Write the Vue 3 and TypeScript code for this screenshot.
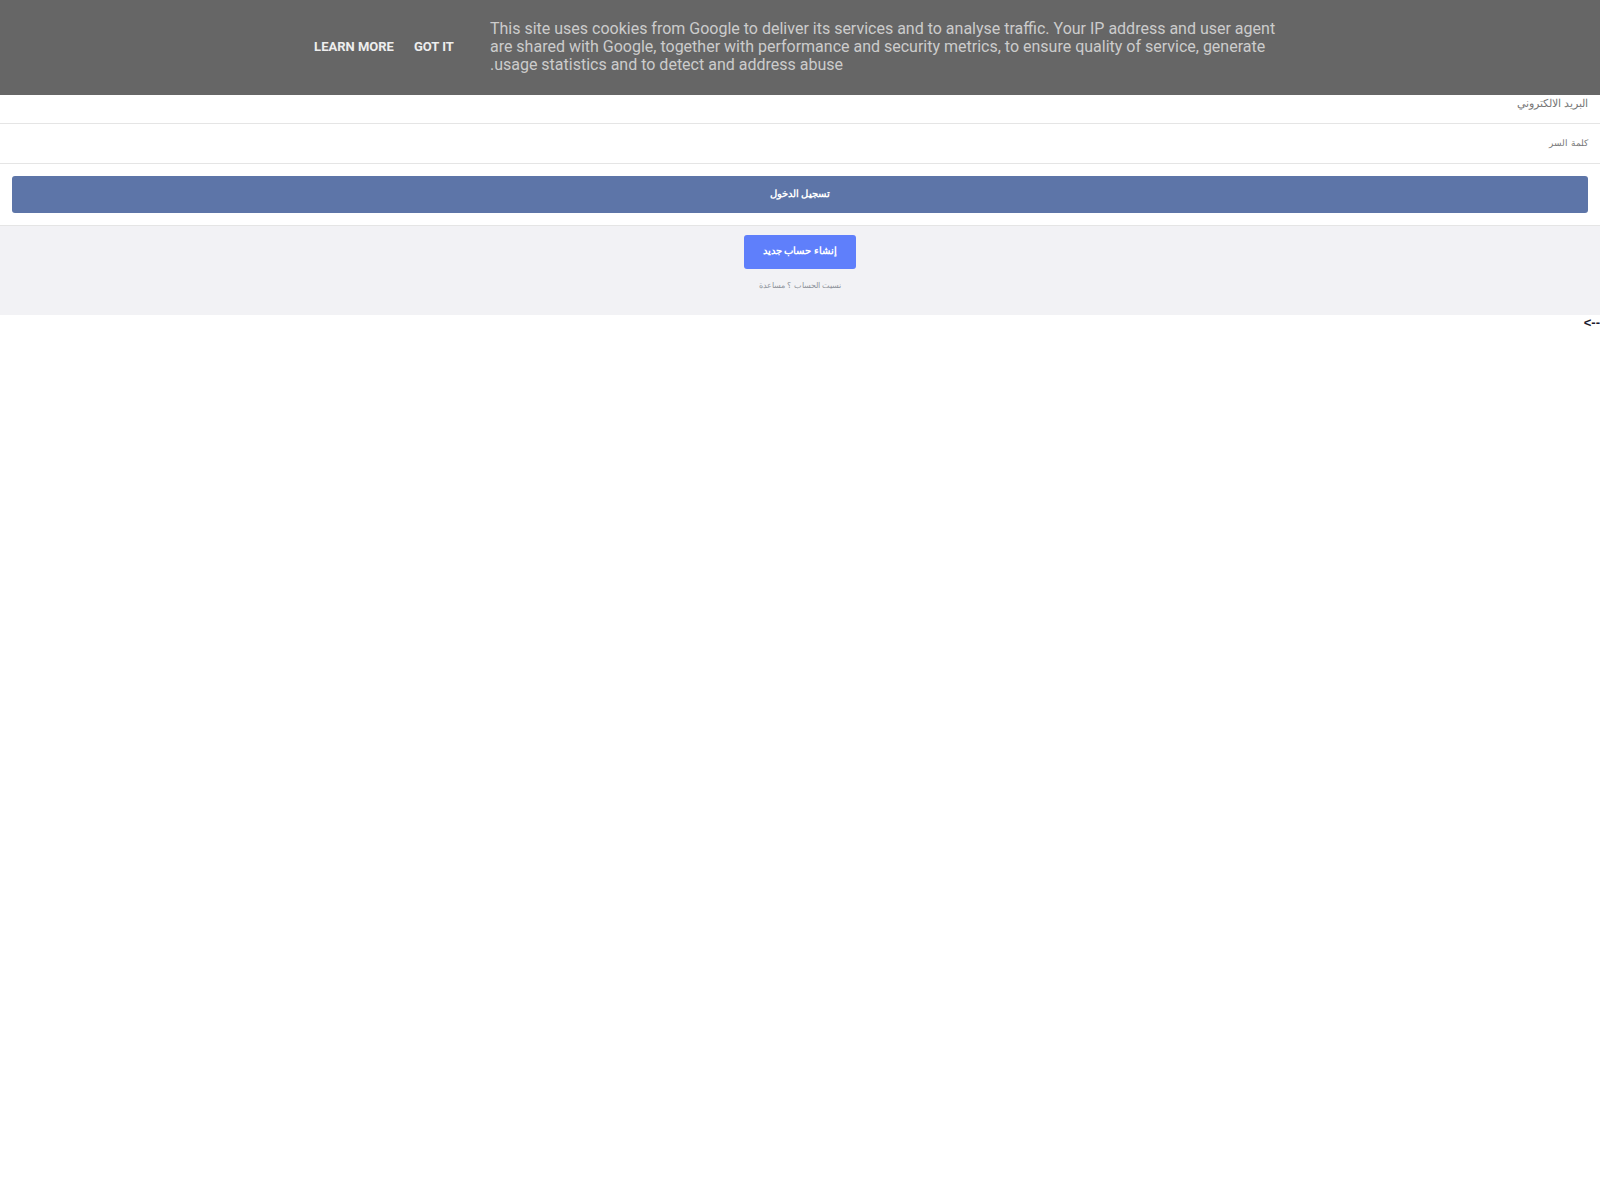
<script setup lang="ts">
const cookieText =
  'This site uses cookies from Google to deliver its services and to analyse traffic. Your IP address and user agent are shared with Google, together with performance and security metrics, to ensure quality of service, generate usage statistics and to detect and address abuse.'
</script>

<template>
  <div class="page" dir="rtl">
    <div class="cookie">
      <div class="cookie-text">{{ cookieText }}</div>
      <div class="cookie-actions">
        <a class="cookie-link">GOT IT</a>
        <a class="cookie-link">LEARN MORE</a>
      </div>
    </div>
    <div class="field field-first">البريد الالكتروني</div>
    <div class="field field-second">كلمة السر</div>
    <div class="login-wrap">
      <button class="login">تسجيل الدخول</button>
    </div>
    <div class="footer-box">
      <button class="create">إنشاء حساب جديد</button>
      <div class="help">نسيت الحساب ؟ مساعدة</div>
    </div>
    <div class="stray">--&gt;</div>
  </div>
</template>

<style>
body {
  margin: 0;
  background: #fff;
}
</style>

<style scoped>
.page {
  font-family: "Liberation Sans", Arial, sans-serif;
  min-height: 1200px;
  background: #fff;
}
.cookie {
  height: 95px;
  background: #666;
  display: flex;
  justify-content: center;
  align-items: center;
  box-sizing: border-box;
  padding-bottom: 2px;
  gap: 36px;
}
.cookie-text {
  width: 796px;
  font-family: Roboto, sans-serif;
  font-size: 16px;
  line-height: 18px;
  color: #ccc;
  text-align: left;
}
.cookie-actions {
  display: flex;
  gap: 20px;
  align-items: center;
}
.cookie-link {
  font-family: Roboto, sans-serif;
  font-size: 13px;
  font-weight: 700;
  color: #eee;
  white-space: nowrap;
}
.field {
  border-bottom: 1px solid #e5e5e5;
  padding: 12px 12px 0;
  height: 27px;
  line-height: 14px;
  color: #777;
}
.field-first {
  height: 28px;
  padding-top: 0;
  font-size: 11px;
  line-height: 16px;
}
.field-second {
  font-size: 9px;
}
.login-wrap {
  padding: 12px;
  border-bottom: 1px solid #e5e5e5;
}
.login {
  display: block;
  width: 100%;
  height: 37px;
  border: 0;
  border-radius: 3px;
  background: #5d75a8;
  color: #fff;
  font-family: inherit;
  font-size: 10.3px;
  font-weight: 700;
  padding: 0 0 3px;
}
.footer-box {
  height: 89px;
  background: #f2f2f5;
  display: flex;
  flex-direction: column;
  align-items: center;
  box-sizing: border-box;
  padding-top: 9px;
}
.create {
  width: 112px;
  height: 34px;
  border: 0;
  border-radius: 3px;
  background: #5f7ffb;
  color: #fff;
  font-family: inherit;
  font-size: 10.3px;
  font-weight: 700;
  padding: 0 0 4px;
}
.help {
  margin-top: 10px;
  font-size: 8.3px;
  line-height: 13px;
  color: #90949c;
}
.stray {
  font-size: 13px;
  font-weight: 700;
  line-height: 15px;
  color: #1a1a2e;
}
</style>
